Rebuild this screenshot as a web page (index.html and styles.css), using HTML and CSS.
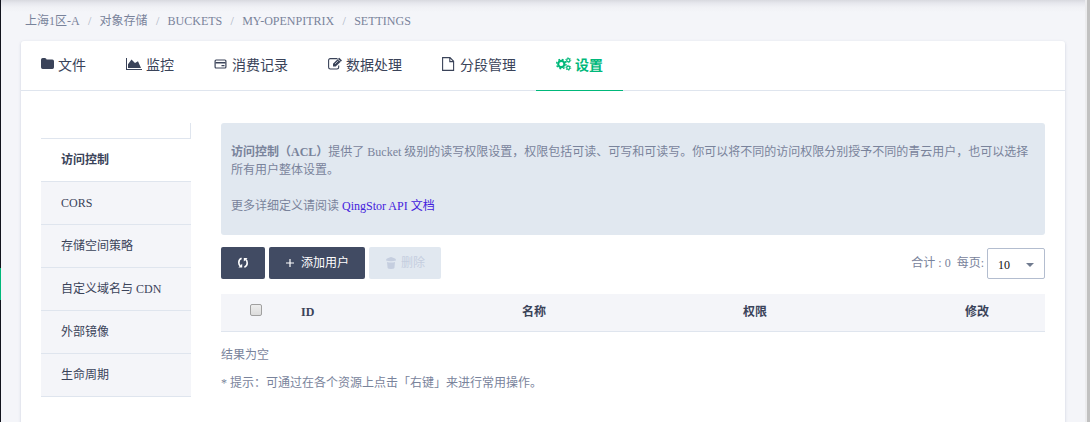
FILE: index.html
```html
<!DOCTYPE html>
<html lang="zh-CN">
<head>
<meta charset="utf-8">
<title>Settings</title>
<link rel="stylesheet" href="styles.css">
</head>
<body>
<div class="app">
  <aside class="rail"><div class="rail-active"></div></aside>
  <main class="main">
    <nav class="crumbs"><span>上海1区-A</span><i>/</i><span>对象存储</span><i>/</i><span>BUCKETS</span><i>/</i><span>MY-OPENPITRIX</span><i>/</i><span>SETTINGS</span></nav>
    <section class="card">
      <nav class="tabs">
        <a class="tab tab-file"><svg width="14" height="14" viewBox="0 0 14 14"><path fill="currentColor" d="M0 2.7Q0 1 1.7 1H3.8Q5.4 1 5.6 2.6H11.4Q13 2.6 13 4.3V10.3Q13 12 11.4 12H1.7Q0 12 0 10.3Z"/></svg><span>文件</span></a>
        <a class="tab tab-chart"><svg width="17" height="14" viewBox="0 0 17 14"><path fill="currentColor" d="M0 1H1V12H16V13H0ZM2 11V7.2L5.5 2.5L9 6L12 4.2L15 11Z"/></svg><span>监控</span></a>
        <a class="tab tab-bill"><svg width="13" height="14" viewBox="0 0 13 14"><rect x="1.1" y="3" width="10.8" height="8" rx="1" fill="none" stroke="currentColor" stroke-width="1.2"/><path fill="currentColor" d="M1.5 5H11.5V6.5H1.5ZM7.5 8H10.5V9.2H7.5Z"/></svg><span>消费记录</span></a>
        <a class="tab tab-edit"><svg width="15" height="14" viewBox="0 0 15 14"><path fill="none" stroke="currentColor" stroke-width="1.1" d="M9.5 1.6H2.3Q.6 1.6 .6 3.3V10.3Q.6 12 2.3 12H9Q10.7 12 10.7 10.3V8.4"/><path fill="currentColor" d="M5 6.8L11.2 .8L14 3.4L7.7 9.6H5Z"/><path stroke="#fff" stroke-width=".6" d="M10 2.1L12.5 4.6M7 7L10.3 3.7"/></svg><span>数据处理</span></a>
        <a class="tab tab-doc"><svg width="13" height="14" viewBox="0 0 13 14"><path fill="none" stroke="currentColor" stroke-width="1.1" d="M.6 .6H8L11.6 4.3V13.4H.6ZM7.8 .8V4.6H11.5"/></svg><span>分段管理</span></a>
        <a class="tab tab-cog active"><svg width="16" height="14" viewBox="0 0 16 14"><g fill="none" stroke="currentColor"><circle cx="5.3" cy="7" r="3.1" stroke-width="2.1"/><circle cx="5.3" cy="7" r="4.7" stroke-width="1.4" stroke-dasharray="1.8 1.89"/><circle cx="12.3" cy="3.2" r="1.6" stroke-width="1.2"/><circle cx="12.3" cy="3.2" r="2.5" stroke-width=".9" stroke-dasharray="1.2 1.42"/><circle cx="12.3" cy="10.8" r="1.6" stroke-width="1.2"/><circle cx="12.3" cy="10.8" r="2.5" stroke-width=".9" stroke-dasharray="1.2 1.42"/></g></svg><span>设置</span></a>
      </nav>
      <div class="body">
        <ul class="side">
          <li class="side-top"></li>
          <li class="on">访问控制</li><li>CORS</li><li>存储空间策略</li><li>自定义域名与 CDN</li><li>外部镜像</li><li>生命周期</li>
        </ul>
        <div class="content">
          <div class="notice">
            <p><b>访问控制（ACL）</b>提供了 Bucket 级别的读写权限设置，权限包括可读、可写和可读写。你可以将不同的访问权限分别授予不同的青云用户，也可以选择所有用户整体设置。</p>
            <p>更多详细定义请阅读 <a>QingStor API 文档</a></p>
          </div>
          <div class="toolbar">
            <button class="btn refresh"><svg width="12" height="12" viewBox="0 0 12 12"><path fill="none" stroke="currentColor" stroke-width="1.6" d="M4.6 1.2Q1.8 2.4 1.8 5.4Q1.8 7.8 3.4 9M7.4 10.2Q10.2 9 10.2 6Q10.2 3.6 8.6 2.4"/><path fill="currentColor" d="M1.4 10.4H5.2V6.8ZM10.6 1H6.8V4.6Z"/></svg></button>
            <button class="btn add"><svg width="8" height="8" viewBox="0 0 8 8"><path stroke="currentColor" stroke-width="1.2" d="M4 0V8M0 4H8"/></svg><span>添加用户</span></button>
            <button class="btn del"><svg width="10" height="12" viewBox="0 0 10 12"><path fill="currentColor" d="M3 .8Q5 -.6 7 .8L9 1.5Q10 2 10 3.5Q5 5 0 3.5Q0 2 1 1.5ZM1 5Q5 6 9 5L8.4 11Q8 12 5 12Q2 12 1.6 11Z"/></svg><span>删除</span></button>
            <div class="pager"><span>合计 : 0</span><span class="per">每页:</span><div class="select">10<svg width="8" height="4" viewBox="0 0 8 4"><path fill="#707b8f" d="M0 0H8L4 4Z"/></svg></div></div>
          </div>
          <div class="thead"><div class="check"><span class="box"></span></div><b>ID</b><b>名称</b><b>权限</b><b>修改</b></div>
          <p class="empty">结果为空</p>
          <p class="hint">* 提示：可通过在各个资源上点击「右键」来进行常用操作。</p>
        </div>
      </div>
    </section>
  </main>
  <div class="track"></div>
</div>
</body>
</html>
```
FILE: styles.css
```css
* { box-sizing: border-box; }
body { margin: 0; overflow: hidden; font: 12px/18px "Liberation Serif", "Noto Sans CJK SC", serif; color: #79839b; }
p, ul { margin: 0; padding: 0; }
svg { display: block; flex: none; }
.app { display: flex; width: 1090px; height: 422px; background: #f4f5f9; }
.rail { width: 1px; background: #11131d; padding-top: 268px; }
.rail-active { height: 32px; background: #00b87a; }
.main { width: 1084px; padding: 0 20px; background: linear-gradient(#d8d9df, #e6e7ed 3px, #f0f1f5 7px, #f4f5f9 12px) no-repeat; background-size: 100% 12px; }
.track { width: 5px; background: #c1c1c1; border-left: 2px solid #ececee; }
.crumbs { height: 41px; padding: 12px 0 0 4px; display: flex; }
.crumbs i { font-style: normal; margin: 0 8.3px; color: #a9b1c2; }
.card { height: 400px; background: #fff; border-radius: 3px 3px 0 0; box-shadow: 0 1px 3px rgba(60, 70, 120, .22); }
.tabs { display: flex; height: 50px; border-bottom: 1px solid #dfe5ee; }
.tab { display: flex; height: 50px; padding: 0 20px; font-size: 14px; line-height: 50px; color: #3a4359; }
.tab svg { margin-top: 16px; }
.tab span { margin-left: auto; white-space: nowrap; }
.tab-file { width: 85px; }
.tab-chart { width: 88px; }
.tab-bill, .tab-edit, .tab-doc { width: 114px; }
.tab-cog { width: 87px; }
.active { color: #00b87a; font-weight: bold; border-bottom: 1px solid #00b87a; }
.body { display: flex; gap: 30px; padding: 32px 20px; }
.side { width: 150px; list-style: none; color: #3a4359; }
.side li { height: 43px; padding: 0 20px; line-height: 42px; background: #f4f5f9; border-bottom: 1px solid #dfe5ee; }
.side .side-top { height: 16px; background: #fff; border-right: 1px solid #dfe5ee; }
.side .on { background: #fff; font-weight: bold; }
.content { width: 824px; }
.notice { height: 112px; padding: 20px 10px; background: #e1e8f0; border-radius: 3px; }
.notice p + p { margin-top: 18px; }
.notice a { color: #4422dd; }
.toolbar { display: flex; gap: 4px; margin-top: 12px; height: 32px; }
.btn { display: flex; align-items: center; justify-content: center; padding: 0; border: 0; border-radius: 2px; background: #414b63; color: #fff; font: inherit; }
.refresh { width: 44px; }
.add { width: 96px; gap: 7px; padding-left: 1px; }
.del { width: 72px; gap: 5px; padding-left: 1px; background: #e1e8f0; color: #c5cedf; }
.pager { display: flex; margin-left: auto; line-height: 32px; }
.per { margin: 0 3px 0 6px; }
.select { display: flex; align-items: center; justify-content: space-between; width: 58px; height: 31px; margin-top: 1px; padding: 3px 10px 0; border: 1px solid #b3bdcf; border-radius: 2px; color: #111; }
.thead { display: grid; grid-template-columns: 80px 221px 221px 222px 80px; height: 38px; margin-top: 15px; line-height: 36px; background: #f4f5f9; border-bottom: 1px solid #dfe5ee; color: #3a4359; }
.check { padding: 10px 0 0 29px; }
.box { display: block; width: 12px; height: 12px; border: 1px solid #a0a0a0; border-radius: 2px; background: linear-gradient(#eee, #dcdcdc); }
.empty { margin-top: 14px; }
.hint { margin-top: 10px; }
```
